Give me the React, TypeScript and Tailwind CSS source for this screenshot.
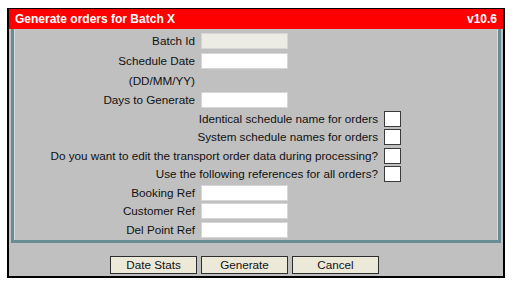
const inputRows = [
  { label: "Batch Id", disabled: true, h: "h-[20px]" },
  { label: "Schedule Date", h: "h-[20px]" },
];

const checkRows = [
  { label: "Identical schedule name for orders", h: "h-[19px]" },
  { label: "System schedule names for orders", h: "h-[18px]" },
  { label: "Do you want to edit the transport order data during processing?", h: "h-[19px]" },
  { label: "Use the following references for all orders?", h: "h-[18px]" },
];

const refRows = [
  { label: "Booking Ref", h: "h-[19px]" },
  { label: "Customer Ref", h: "h-[18px]" },
  { label: "Del Point Ref", h: "h-[19px]" },
];

function InputRow({ label, h, disabled }: { label: string; h: string; disabled?: boolean }) {
  return (
    <div className={`flex items-center ${h}`}>
      <span className="w-[187px] pr-[6px] text-right">{label}</span>
      <div
        className={`h-[16px] w-[87px] border border-[#d6d6d6] ${
          disabled ? "bg-[#ecebe4]" : "bg-white"
        }`}
      />
    </div>
  );
}

function CheckRow({ label, h }: { label: string; h: string }) {
  return (
    <div className={`flex items-center ${h}`}>
      <span className="w-[370px] pr-[6px] text-right">{label}</span>
      <div className="h-[16px] w-[17px] border border-[#3a3a3a] bg-white" />
    </div>
  );
}

function Button({ children }: { children: React.ReactNode }) {
  return (
    <button className="h-[18px] w-[87px] border border-[#2e2e2e] bg-[#ece9d8] text-[11.7px] leading-none text-[#111]">
      {children}
    </button>
  );
}

export default function App() {
  return (
    <div className="h-[289px] w-[517px] bg-white pl-[7px] pt-[8px] font-['Liberation_Sans',Arial,sans-serif] text-[11.7px] text-[#111]">
      <div className="flex h-[270px] w-[498px] flex-col border-2 border-t border-black bg-[#c0c0c0]">
        {/* Title bar */}
        <div className="flex h-[20px] items-center justify-between bg-[#ff0000] px-[6px] text-[12px] font-bold text-white">
          <span>Generate orders for Batch X</span>
          <span>v10.6</span>
        </div>

        {/* Form panel */}
        <div className="mx-[2px] border-x-[3px] border-b-[3px] border-x-[#6a8c95] border-b-[#6a8c95] pt-[2px] pb-[1px] shadow-[inset_1px_0_0_#d5dcdc,inset_-1px_0_0_#d5dcdc]">
          {inputRows.map((r) => (
            <InputRow key={r.label} {...r} />
          ))}
          <div className="flex h-[19px] items-center">
            <span className="w-[187px] pr-[6px] text-right">(DD/MM/YY)</span>
          </div>
          <InputRow label="Days to Generate" h="h-[19px]" />
          {checkRows.map((r) => (
            <CheckRow key={r.label} {...r} />
          ))}
          {refRows.map((r) => (
            <InputRow key={r.label} {...r} />
          ))}
        </div>

        <div className="mt-[13px] flex gap-[4px] pl-[101px]">
          <Button>Date Stats</Button>
          <Button>Generate</Button>
          <Button>Cancel</Button>
        </div>
      </div>
    </div>
  );
}
